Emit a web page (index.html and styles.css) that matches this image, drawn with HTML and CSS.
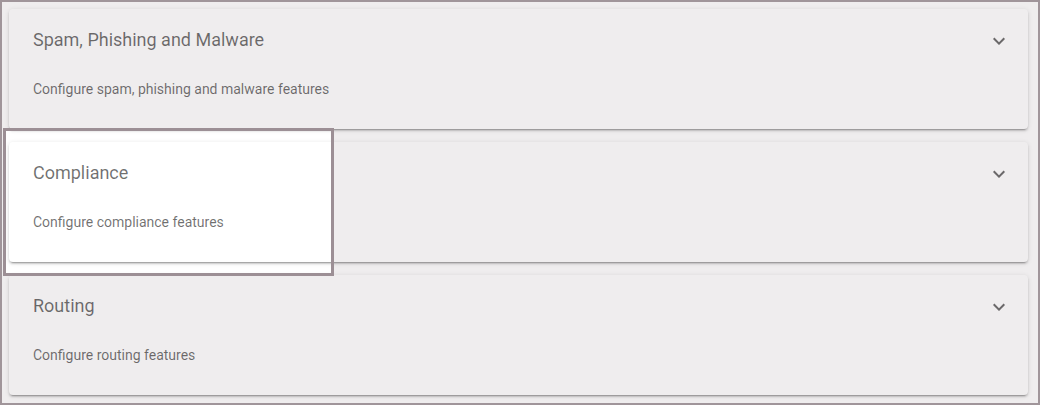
FILE: index.html
```html
<!DOCTYPE html>
<html>
<head>
<meta charset="utf-8">
<link rel="stylesheet" href="styles.css">
</head>
<body>
<div class="frame">
  <div class="panel">
    <div class="header">
      <div class="title">Spam, Phishing and Malware</div>
      <svg class="chev" viewBox="0 0 24 24"><path d="M16.59 8.59L12 13.17 7.41 8.59 6 10l6 6 6-6z"/></svg>
    </div>
    <div class="desc">Configure spam, phishing and malware features</div>
  </div>
  <div class="panel">
    <div class="header">
      <div class="title">Compliance</div>
      <svg class="chev" viewBox="0 0 24 24"><path d="M16.59 8.59L12 13.17 7.41 8.59 6 10l6 6 6-6z"/></svg>
    </div>
    <div class="desc">Configure compliance features</div>
  </div>
  <div class="panel">
    <div class="header">
      <div class="title">Routing</div>
      <svg class="chev" viewBox="0 0 24 24"><path d="M16.59 8.59L12 13.17 7.41 8.59 6 10l6 6 6-6z"/></svg>
    </div>
    <div class="desc">Configure routing features</div>
  </div>
  <div class="spotlight"></div>
</div>
</body>
</html>
```

FILE: styles.css
```css
html, body {
  margin: 0;
  padding: 0;
  background: #ffffff;
  overflow: hidden;
}
.frame {
  position: relative;
  box-sizing: border-box;
  width: 1040px;
  height: 405px;
  border: 2px solid #a0959a;
  padding: 7px 10px 0 7px;
  display: flex;
  flex-direction: column;
  gap: 13px;
  font-family: Roboto, "Liberation Sans", sans-serif;
  overflow: hidden;
}
.panel {
  box-sizing: border-box;
  height: 120px;
  background: #ffffff;
  border-radius: 4px;
  padding: 19px 17px 0 24px;
  box-shadow: 0 3px 1px -2px rgba(0,0,0,.2), 0 2px 2px 0 rgba(0,0,0,.14), 0 1px 5px 0 rgba(0,0,0,.12);
}
.header {
  display: flex;
  align-items: flex-start;
}
.title {
  flex: 1;
  font-size: 18px;
  line-height: 24px;
  color: rgba(0,0,0,.56);
}
.chev {
  width: 24px;
  height: 24px;
  margin-top: 1px;
  fill: rgba(0,0,0,.56);
}
.desc {
  margin-top: 26px;
  font-size: 14px;
  line-height: 20px;
  color: rgba(0,0,0,.56);
}
.spotlight {
  position: absolute;
  left: 1px;
  top: 126px;
  width: 331px;
  height: 148px;
  box-sizing: border-box;
  border: 3px solid #9c8f95;
  box-shadow: 0 0 0 2000px rgba(40,10,25,.075);
  pointer-events: none;
}
```
